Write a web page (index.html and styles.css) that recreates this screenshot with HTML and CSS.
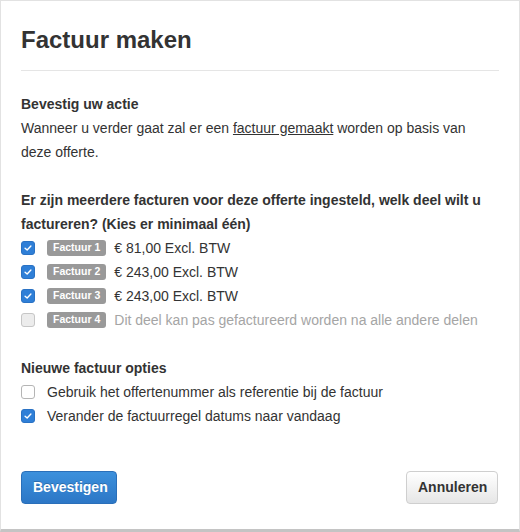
FILE: index.html
```html
<!DOCTYPE html>
<html lang="nl">
<head>
<meta charset="utf-8">
<title>Factuur maken</title>
<link rel="stylesheet" href="styles.css">
</head>
<body>
<div class="modal">
  <div class="modal-header">
    <h1 class="modal-title">Factuur maken</h1>
  </div>
  <div class="modal-body">
    <section class="block">
      <h2 class="block-title">Bevestig uw actie</h2>
      <p class="text">Wanneer u verder gaat zal er een <a class="link" href="#">factuur gemaakt</a> worden op basis van deze offerte.</p>
    </section>
    <section class="block">
      <h2 class="block-title">Er zijn meerdere facturen voor deze offerte ingesteld, welk deel wilt u factureren? (Kies er minimaal één)</h2>
      <div class="row">
        <span class="check checked"><svg viewBox="0 0 14 14"><path d="M3.6 7.2 L6 9.4 L10.4 4.6" /></svg></span>
        <span class="label">Factuur 1</span>
        <span class="row-text">€ 81,00 Excl. BTW</span>
      </div>
      <div class="row">
        <span class="check checked"><svg viewBox="0 0 14 14"><path d="M3.6 7.2 L6 9.4 L10.4 4.6" /></svg></span>
        <span class="label">Factuur 2</span>
        <span class="row-text">€ 243,00 Excl. BTW</span>
      </div>
      <div class="row">
        <span class="check checked"><svg viewBox="0 0 14 14"><path d="M3.6 7.2 L6 9.4 L10.4 4.6" /></svg></span>
        <span class="label">Factuur 3</span>
        <span class="row-text">€ 243,00 Excl. BTW</span>
      </div>
      <div class="row disabled">
        <span class="check"></span>
        <span class="label">Factuur 4</span>
        <span class="row-text">Dit deel kan pas gefactureerd worden na alle andere delen</span>
      </div>
    </section>
    <section class="block">
      <h2 class="block-title">Nieuwe factuur opties</h2>
      <div class="row">
        <span class="check"></span>
        <span class="row-text">Gebruik het offertenummer als referentie bij de factuur</span>
      </div>
      <div class="row">
        <span class="check checked"><svg viewBox="0 0 14 14"><path d="M3.6 7.2 L6 9.4 L10.4 4.6" /></svg></span>
        <span class="row-text">Verander de factuurregel datums naar vandaag</span>
      </div>
    </section>
  </div>
  <div class="modal-footer">
    <button class="btn btn-primary" type="button">Bevestigen</button>
    <button class="btn btn-default" type="button">Annuleren</button>
  </div>
</div>
</body>
</html>
```
FILE: styles.css
```css
* { box-sizing: border-box; }
html, body { margin: 0; padding: 0; background: #fff; }
body {
  font-family: "Liberation Sans", Arial, Helvetica, sans-serif;
  font-size: 14px;
  color: #333;
}
.modal {
  width: 520px;
  height: 532px;
  border: 1px solid #e2e2e2;
  border-bottom: 3px solid #c4c4c4;
  padding: 0 20px;
  display: flex;
  flex-direction: column;
}
.modal-header {
  padding-top: 24px;
  padding-bottom: 15px;
  border-bottom: 1px solid #e5e5e5;
}
.modal-title {
  margin: 0;
  font-size: 24px;
  line-height: 30px;
  font-weight: bold;
  color: #333;
}
.modal-body {
  padding-top: 21px;
}
.block { margin: 0 0 24px; }
.block:last-child { margin-bottom: 0; }
.block-title {
  margin: 0;
  font-size: 14px;
  line-height: 24px;
  font-weight: bold;
  color: #333;
}
.text { margin: 0; line-height: 24px; }
.link { color: #333; text-decoration: underline; }
.row {
  display: flex;
  align-items: center;
  height: 24px;
}
.check {
  width: 14px;
  height: 14px;
  border: 1px solid #b5b5b5;
  border-radius: 3px;
  background: #fff;
  margin-right: 12px;
  flex: none;
  display: flex;
}
.check svg { width: 12px; height: 12px; }
.check svg path {
  fill: none;
  stroke: #fff;
  stroke-width: 1.6;
  stroke-linecap: round;
  stroke-linejoin: round;
}
.check.checked {
  background: #2f7fd7;
  border-color: #2a72c4;
}
.row.disabled .check {
  background: #ececec;
  border-color: #c6c6c6;
}
.label {
  background: #999;
  color: #fff;
  font-size: 10.5px;
  font-weight: bold;
  line-height: 1;
  padding: 2px 6px 3px;
  border-radius: 3px;
  margin-right: 8px;
  flex: none;
}
.row-text { line-height: 24px; white-space: nowrap; }
.row.disabled .row-text { color: #a5a5a5; }
.modal-footer {
  margin-top: 43px;
  display: flex;
  justify-content: space-between;
  padding-right: 1px;
}
.btn {
  font-family: "Liberation Sans", Arial, Helvetica, sans-serif;
  font-size: 14px;
  font-weight: bold;
  line-height: 19px;
  padding: 6px 11px;
  border-radius: 4px;
  cursor: pointer;
}
.btn-primary {
  color: #fff;
  background: linear-gradient(#3c90dc, #2c77c6);
  border: 1px solid #2a6fb9;
  text-shadow: 0 -1px 0 rgba(0,0,0,0.2);
  width: 96px;
}
.btn-default {
  color: #333;
  background: linear-gradient(#fff, #e6e6e6);
  border: 1px solid #cfcfcf;
  width: 92px;
}
```
